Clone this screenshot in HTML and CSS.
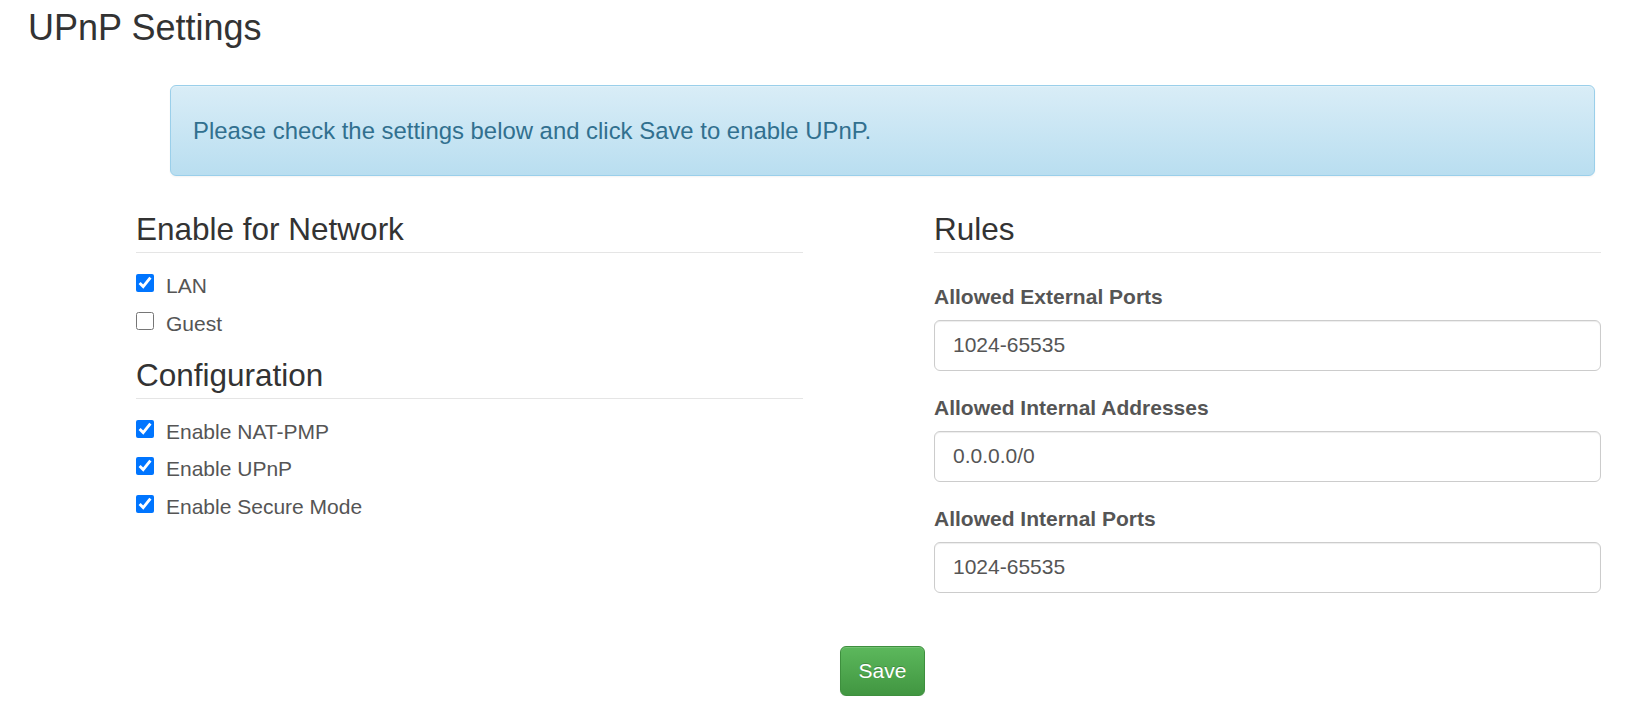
FILE: index.html
```html
<!DOCTYPE html>
<html lang="en">
<head>
<meta charset="utf-8">
<title>UPnP Settings</title>
<link rel="stylesheet" href="styles.css">
</head>
<body>
<div class="page">
  <h1 class="title">UPnP Settings</h1>
  <div class="inner">
    <div class="alert">Please check the settings below and click Save to enable UPnP.</div>
    <div class="columns">
      <div class="col">
        <div class="legend">Enable for Network</div>
        <div class="checks">
          <label class="check"><input type="checkbox" checked><span>LAN</span></label>
          <label class="check"><input type="checkbox"><span>Guest</span></label>
        </div>
        <div class="legend legend-next">Configuration</div>
        <div class="checks">
          <label class="check"><input type="checkbox" checked><span>Enable NAT-PMP</span></label>
          <label class="check"><input type="checkbox" checked><span>Enable UPnP</span></label>
          <label class="check"><input type="checkbox" checked><span>Enable Secure Mode</span></label>
        </div>
      </div>
      <div class="col">
        <div class="legend">Rules</div>
        <div class="group">
          <label class="field-label">Allowed External Ports</label>
          <input class="field" type="text" value="1024-65535">
        </div>
        <div class="group">
          <label class="field-label">Allowed Internal Addresses</label>
          <input class="field" type="text" value="0.0.0.0/0">
        </div>
        <div class="group">
          <label class="field-label">Allowed Internal Ports</label>
          <input class="field" type="text" value="1024-65535">
        </div>
      </div>
    </div>
    <div class="actions">
      <button class="btn-save" type="button">Save</button>
    </div>
  </div>
</div>
</body>
</html>
```

FILE: styles.css
```css
* {
  box-sizing: border-box;
}

html, body {
  margin: 0;
  padding: 0;
  background: #ffffff;
}

body {
  font-family: "Liberation Sans", Arial, Helvetica, sans-serif;
  font-size: 21px;
  line-height: 30px;
  color: #333333;
}

.page {
  padding-top: 8px;
}

.title {
  margin: 0;
  padding-left: 28px;
  font-size: 36px;
  line-height: 40px;
  font-weight: normal;
  color: #333333;
}

.inner {
  padding-left: 136px;
}

.alert {
  margin-top: 37px;
  margin-left: 34px;
  width: 1425px;
  padding: 27px 22px;
  font-size: 23.9px;
  line-height: 35px;
  color: #31708f;
  background: linear-gradient(to bottom, #d9edf7 0%, #b9def0 100%);
  border: 1px solid #9acfea;
  border-radius: 6px;
  box-shadow: inset 0 1px 0 rgba(255, 255, 255, 0.25), 0 1px 2px rgba(0, 0, 0, 0.05);
}

.columns {
  margin-top: 31px;
  display: grid;
  grid-template-columns: 667px 667px;
  column-gap: 131px;
}

.col {
  display: flex;
  flex-direction: column;
}

.legend {
  font-size: 31.5px;
  line-height: 45px;
  color: #333333;
  border-bottom: 1px solid #e5e5e5;
  margin-bottom: 29px;
}

.legend-next {
  margin-top: 14px;
}

.checks {
  margin-top: -11px;
  display: flex;
  flex-direction: column;
  gap: 7.5px;
}

.check {
  display: flex;
  align-items: flex-start;
  height: 30px;
  color: #555555;
  cursor: pointer;
}

.check input {
  width: 18px;
  height: 18px;
  margin: 3px 12px 0 0;
  accent-color: #0075ff;
}

.group {
  display: flex;
  flex-direction: column;
  margin-bottom: 22.5px;
}

.field-label {
  font-weight: bold;
  color: #555555;
  margin-bottom: 7.5px;
}

.field {
  height: 51px;
  padding: 9px 18px;
  font-family: inherit;
  font-size: 21px;
  line-height: 30px;
  color: #555555;
  background: #ffffff;
  border: 1px solid #cccccc;
  border-radius: 6px;
  box-shadow: inset 0 1px 1px rgba(0, 0, 0, 0.075);
  outline: none;
}

.actions {
  margin-left: 34px;
  width: 1425px;
  margin-top: 31px;
  display: flex;
  justify-content: center;
}

.btn-save {
  padding: 9px 18px;
  font-family: inherit;
  font-size: 21px;
  line-height: 30px;
  color: #ffffff;
  background: linear-gradient(to bottom, #5cb85c 0%, #419641 100%);
  border: 1px solid #3e8f3e;
  border-radius: 6px;
  text-shadow: 0 -1px 0 rgba(0, 0, 0, 0.2);
  box-shadow: inset 0 1px 0 rgba(255, 255, 255, 0.15), 0 1px 1px rgba(0, 0, 0, 0.075);
  cursor: pointer;
}
```
